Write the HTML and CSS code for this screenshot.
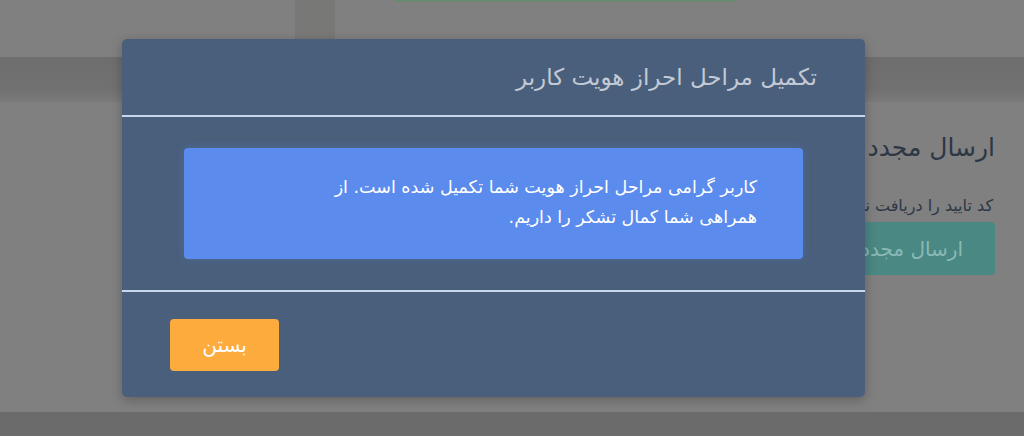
FILE: index.html
```html
<!DOCTYPE html>
<html lang="fa" dir="rtl">
<head>
<meta charset="utf-8">
<title>تکمیل مراحل احراز هویت کاربر</title>
<link rel="stylesheet" href="styles.css">
</head>
<body>
<div class="page">
  <div class="top-row">
    <div class="card card-main"><div class="green-bar"></div></div>
    <div class="card card-side"></div>
  </div>
  <div class="band"></div>
  <div class="content-card">
    <h2 class="resend-title">ارسال مجدد کد</h2>
    <p class="resend-text">کد تایید را دریافت نکرده‌اید؟</p>
    <button class="resend-btn">ارسال مجدد کد</button>
  </div>
  <div class="bottom-band"></div>
</div>

<div class="modal">
  <div class="modal-header">
    <h3 class="modal-title">تکمیل مراحل احراز هویت کاربر</h3>
  </div>
  <div class="modal-body">
    <div class="alert">کاربر گرامی مراحل احراز هویت شما تکمیل شده است. از<br>همراهی شما کمال تشکر را داریم.</div>
  </div>
  <div class="modal-footer">
    <button class="close-btn">بستن</button>
  </div>
</div>
</body>
</html>
```

FILE: styles.css
```css
* { box-sizing: border-box; }
html, body {
  margin: 0;
  padding: 0;
  width: 1024px;
  height: 436px;
  overflow: hidden;
  background: #707070;
  font-family: "DejaVu Sans", "Noto Sans", sans-serif;
}
.page {
  display: flex;
  flex-direction: column;
  height: 436px;
}
.top-row {
  display: flex;
  height: 57px;
  gap: 40px;
  background: #787877;
}
.card {
  background: #808080;
  height: 100%;
}
.card-main {
  flex: 1;
  display: flex;
  justify-content: flex-end;
  padding-left: 60px;
}
.green-bar {
  width: 340px;
  height: 2px;
  background: #6a8a70;
}
.card-side {
  width: 295px;
}
.band {
  height: 45px;
  background: linear-gradient(#6e6e6e, #717171 70%, #7a7a7a);
}
.content-card {
  flex: 1;
  background: #808080;
  padding: 31px 29px 0 0;
  direction: rtl;
  overflow: hidden;
  display: flex;
  flex-direction: column;
  align-items: flex-start;
}
.resend-title {
  margin: 0;
  font-size: 25px;
  font-weight: normal;
  color: #2d3746;
  white-space: nowrap;
  line-height: 30px;
}
.resend-text {
  margin: 33px 2px 0 0;
  font-size: 16px;
  color: #2d3746;
  white-space: nowrap;
  line-height: 20px;
}
.resend-btn {
  margin-top: 6px;
  height: 53px;
  padding: 0 32px;
  border: none;
  border-radius: 4px;
  background: #4a8884;
  color: #8ab9b5;
  font-family: inherit;
  font-size: 20px;
  white-space: nowrap;
}
.bottom-band {
  height: 24px;
  background: #6b6b6b;
}

.modal {
  position: absolute;
  left: 122px;
  top: 39px;
  width: 743px;
  height: 358px;
  background: #4a5f7c;
  border-radius: 5px;
  box-shadow: 0 3px 12px rgba(0, 0, 0, 0.25);
  display: flex;
  flex-direction: column;
  direction: rtl;
}
.modal-header {
  height: 78px;
  padding: 0 48px 0 0;
  display: flex;
  align-items: center;
  border-bottom: 2px solid #c9d7ec;
}
.modal-title {
  margin: 0;
  font-size: 23px;
  font-weight: normal;
  color: #c3cad5;
  white-space: nowrap;
}
.modal-body {
  padding: 31px 62px;
  border-bottom: 2px solid #c9d7ec;
}
.alert {
  height: 111px;
  background: #5a8bed;
  border-radius: 4px;
  box-shadow: 0 0 10px rgba(90, 139, 237, 0.25);
  color: #ffffff;
  font-size: 17.5px;
  line-height: 30px;
  padding: 24px 46px 0 0;
  white-space: nowrap;
}
.modal-footer {
  flex: 1;
  padding: 27px 48px 0;
  display: flex;
  justify-content: flex-end;
  align-items: flex-start;
}
.close-btn {
  width: 109px;
  height: 52px;
  border: none;
  border-radius: 4px;
  background: #fdab3d;
  color: #ffffff;
  font-family: inherit;
  font-size: 20px;
}
```
